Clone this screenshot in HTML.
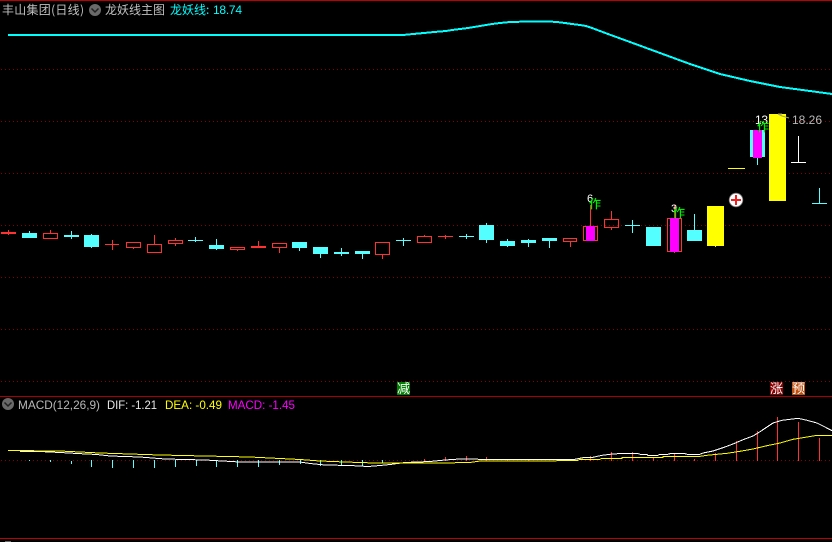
<!DOCTYPE html>
<html><head><meta charset="utf-8"><style>
html,body{margin:0;padding:0;background:#000;width:832px;height:542px;overflow:hidden}
svg{display:block;position:absolute;left:0;top:0}
.t{font-family:"Liberation Sans","WenQuanYi Zen Hei",sans-serif;font-size:12px}
.c{font-family:"WenQuanYi Zen Hei","Noto Sans CJK SC",sans-serif;font-size:12px}
.z{font-family:"Noto Sans CJK SC",sans-serif;font-size:12px;font-weight:500}
</style></head><body>
<svg width="832" height="542" viewBox="0 0 832 542">
<rect width="832" height="542" fill="#000"/>
<g shape-rendering="crispEdges">
<rect x="0" y="0" width="832" height="1" fill="#c00000"/>
<rect x="0" y="396" width="832" height="1" fill="#a80000"/>
<rect x="0" y="538" width="832" height="1" fill="#c00000"/>
<rect x="5" y="541" width="6" height="1" fill="#666"/>
<g stroke="#8a0000" stroke-width="1" stroke-dasharray="1 3" fill="none">
<path d="M1 69.5H832M1 121.5H832M1 173.5H832M1 225.5H832M1 277.5H832M1 329.5H832M1 381.5H832M1 460.5H832"/>
</g>
</g>

<!-- top curve -->
<polyline fill="none" stroke="#00ffff" stroke-width="2" shape-rendering="crispEdges" points="8,35 403,35 413,34 424,33 434,32 446,31 452,30 460,29 468,28 474,27 480,26 486,25 492,24 500,23 510,22 529,21.5 549,21.5 557,22 565,23 572,24 580,25 586,26 592,28 600,31 608,34 630,42 660,53 690,64 720,74 750,81 780,87 810,91 832,94"/>

<!-- candles -->
<g shape-rendering="crispEdges">
<g fill="#ff3232">
<rect x="1" y="232" width="15" height="2"/>
<rect x="251" y="246" width="15" height="2"/>
</g>
<g fill="none" stroke="#ff3232" stroke-width="1">
<path d="M8.5 230V235M50.5 230V233M105 244.5H119M112.5 240V250M133.5 248V249M154.5 235V244M175.5 238V240M175.5 244V246M237.5 250V251M258.5 241V246M279.5 248V253M382.5 255V259M424.5 235V236M438 236.5H453M445.5 235V239M570.5 242V247M590.5 205V226M611.5 211V219M611.5 228V230M674.5 205V218M674.5 252V253"/>
<rect x="43.5" y="233.5" width="14" height="5"/>
<rect x="126.5" y="242.5" width="14" height="5"/>
<rect x="147.5" y="244.5" width="14" height="8"/>
<rect x="168.5" y="240.5" width="14" height="3"/>
<rect x="230.5" y="247.5" width="14" height="2"/>
<rect x="272.5" y="243.5" width="14" height="4"/>
<rect x="375.5" y="242.5" width="14" height="12"/>
<rect x="417.5" y="236.5" width="14" height="6"/>
<rect x="563.5" y="238.5" width="13" height="3"/>
<rect x="604.5" y="219.5" width="14" height="8"/>
<rect x="583.5" y="226.5" width="14" height="14"/>
<rect x="667.5" y="218.5" width="14" height="33"/>
</g>
<g fill="#54ffff">
<rect x="22" y="233" width="15" height="5"/>
<rect x="64" y="235" width="15" height="2"/>
<rect x="84" y="235" width="15" height="12"/>
<rect x="209" y="245" width="15" height="4"/>
<rect x="292" y="242" width="15" height="6"/>
<rect x="313" y="247" width="15" height="7"/>
<rect x="334" y="252" width="15" height="2"/>
<rect x="355" y="251" width="15" height="3"/>
<rect x="479" y="225" width="15" height="15"/>
<rect x="500" y="241" width="15" height="5"/>
<rect x="521" y="240" width="15" height="3"/>
<rect x="542" y="238" width="15" height="3"/>
<rect x="646" y="227" width="15" height="19"/>
<rect x="687" y="230" width="15" height="11"/>
<rect x="750" y="130" width="15" height="27"/>
</g>
<path fill="none" stroke="#54ffff" d="M29.5 231V233M71.5 231V239M91.5 234V248M188 240.5H203M195.5 237V242M216.5 239V250M299.5 248V251M320.5 254V258M341.5 248V256M362.5 254V259M396 240.5H411M403.5 238V246M459 236.5H474M466.5 234V239M486.5 223V243M507.5 239V247M528.5 239V247M549.5 241V248M625 225.5H640M632.5 220V233M694.5 214V230M757.5 158V165M812 203.5H827M819.5 188V203"/>
<g fill="#ff00ff">
<rect x="586" y="226" width="9" height="15"/>
<rect x="670" y="218" width="9" height="34"/>
<rect x="753" y="130" width="9" height="28"/>
</g>
<g fill="#ffff00">
<rect x="707" y="206" width="17" height="40"/>
<rect x="715" y="246" width="1" height="1"/>
<rect x="728" y="168" width="17" height="1"/>
<rect x="769" y="114" width="17" height="87"/>
</g>
<path fill="none" stroke="#fff" d="M791 162.5H806M798.5 136V162"/>
</g>

<!-- plus icon -->
<circle cx="736" cy="200" r="6.8" fill="#fff" stroke="#777" stroke-width="0.8"/>
<g shape-rendering="crispEdges" fill="#f02020">
<rect x="731" y="199" width="10" height="2"/>
<rect x="735" y="195" width="2" height="10"/>
</g>

<!-- markers -->
<text x="587" y="202" class="t" fill="#fff" style="font-size:11px">6</text>
<text x="589" y="208" class="z" fill="#00f000">作</text>
<text x="671" y="212" class="t" fill="#fff" style="font-size:11px">3</text>
<text x="673" y="217" class="z" fill="#00f000">作</text>
<text x="755" y="124" class="t" fill="#fff" textLength="13">13</text>
<text x="757" y="131" class="z" fill="#00f000">作</text>
<path d="M778 114L782 116M778 114H782M782 116L789 118" stroke="#a0a060" stroke-width="1" fill="none"/>
<text x="792" y="124" class="t" fill="#b8b8b8" textLength="30">18.26</text>

<!-- header -->
<text x="2" y="14" class="c" fill="#c0c0c0" textLength="82">丰山集团(日线)</text>
<circle cx="95" cy="10" r="6" fill="#6a6a6a"/>
<path d="M91.5 8.5L95 12L98.5 8.5" fill="none" stroke="#222" stroke-width="1.5"/>
<text x="105" y="14" class="c" fill="#c0c0c0">龙妖线主图</text>
<text x="170" y="14" class="c" fill="#00ffff">龙妖线:</text>
<text x="213" y="14" class="t" fill="#00ffff" textLength="29">18.74</text>

<!-- MACD header -->
<circle cx="8" cy="404" r="6" fill="#6a6a6a"/>
<path d="M4.5 402.500L8 406L11.500 402.500" fill="none" stroke="#222" stroke-width="1.5"/>
<text x="18" y="409" class="t" fill="#b8b8b8" textLength="82" lengthAdjust="spacingAndGlyphs">MACD(12,26,9)</text>
<text x="107" y="409" class="t" fill="#e8e8e8" textLength="50" lengthAdjust="spacingAndGlyphs">DIF: -1.21</text>
<text x="165" y="409" class="t" fill="#ffff00" textLength="57" lengthAdjust="spacingAndGlyphs">DEA: -0.49</text>
<text x="228" y="409" class="t" fill="#ff00ff" textLength="67" lengthAdjust="spacingAndGlyphs">MACD: -1.45</text>

<!-- labels -->
<g shape-rendering="crispEdges">
<rect x="397" y="382" width="13" height="13" fill="#008000"/>
<rect x="770" y="382" width="13" height="13" fill="#8a0000"/>
<rect x="792" y="382" width="13" height="13" fill="#c05010"/>
</g>
<text x="397" y="393" class="c" fill="#fff" style="font-size:13px">减</text>
<text x="770" y="393" class="c" fill="#fff" style="font-size:13px">涨</text>
<text x="792" y="393" class="c" fill="#fff" style="font-size:13px">预</text>

<!-- MACD bars -->
<g shape-rendering="crispEdges" fill="none">
<path stroke="#54ffff" d="M29.500 460V461M50.500 460V462M71.500 461V464M91.500 460V467M112.500 460V468M133.500 460V468M154.500 460V468M175.500 460V467M196.500 460V466M216.500 460V467M237.500 460V467M258.500 460V467M279.500 460V465M300.500 460V464M320.500 460V466M341.500 460V466M362.500 460V466M382.500 460V463"/>
<path stroke="#ff3232" d="M424.500 459V461M445.500 457V461M466.500 456V461M486.500 457V461M507.500 459V461M528.500 459V461M570.500 459V461M590.500 456V461M611.500 452V461M632.500 452V461M653.500 458V461M674.500 454V461M694.500 459V461M715.500 453V461M736.500 441V461M757.500 431V461M777.500 417V461M798.500 422V461M819.500 438V461"/>
</g>

<!-- MACD lines -->
<polyline fill="none" stroke="#fff" stroke-width="1" shape-rendering="crispEdges" points="20,451.300 40,451.500 60,452.500 77,453.500 97,454.500 110,456 140,457 165,459 205,460 240,462 300,462 310,463.500 325,465 350,465.500 368,466.500 380,465.500 390,464.500 405,462.500 430,461.500 445,460 460,459 495,459.500 560,459.300 575,459.300 585,457.300 593,457.300 602,455.300 610,454.300 623,453.300 637,453.300 640,454.300 647,454.300 648,455.300 658,455.300 660,454.300 668,454.300 670,453.700 685,453.700 687,454.300 700,454.300 703,453 713,451 723,447.700 733,444 743,439.700 753,436 760,431.700 767,427 773,423 782,420.300 790,419.300 798,418.300 807,420.300 817,423 823,426 832,430.700"/>
<polyline fill="none" stroke="#ffff00" stroke-width="1" shape-rendering="crispEdges" points="8,450.500 60,451 80,452 100,453 130,454 160,455 205,456 250,457 300,459.500 320,461 345,462 375,463 440,463 470,462.500 480,461 540,461 560,460.700 577,460.700 580,459.300 600,459.300 602,458.300 622,458.300 622,457.300 663,457.300 663,456.300 700,456.300 707,455.300 717,454.300 727,453.300 740,451.300 753,449 767,445.700 780,443 793,439.300 807,437 817,435.300 832,435.300"/>
</svg>
</body></html>
